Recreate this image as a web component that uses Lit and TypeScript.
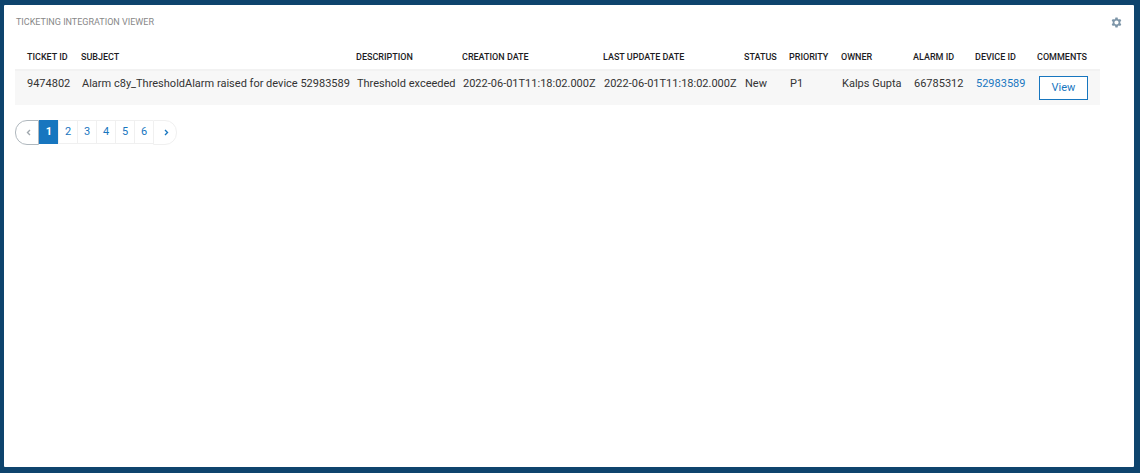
import { LitElement, html, css } from "lit";
import { customElement, state } from "lit/decorators.js";

interface Ticket {
  id: string;
  subject: string;
  description: string;
  created: string;
  updated: string;
  status: string;
  priority: string;
  owner: string;
  alarmId: string;
  deviceId: string;
}

const COLUMNS = [
  { label: "Ticket ID", width: 60 },
  { label: "Subject", width: 275 },
  { label: "Description", width: 106 },
  { label: "Creation Date", width: 141 },
  { label: "Last Update Date", width: 141 },
  { label: "Status", width: 45 },
  { label: "Priority", width: 52 },
  { label: "Owner", width: 72 },
  { label: "Alarm ID", width: 62 },
  { label: "Device ID", width: 62 },
  { label: "Comments", width: 69 },
];

const TICKETS: Ticket[] = [
  {
    id: "9474802",
    subject: "Alarm c8y_ThresholdAlarm raised for device 52983589",
    description: "Threshold exceeded",
    created: "2022-06-01T11:18:02.000Z",
    updated: "2022-06-01T11:18:02.000Z",
    status: "New",
    priority: "P1",
    owner: "Kalps Gupta",
    alarmId: "66785312",
    deviceId: "52983589",
  },
];

@customElement("ticket-table")
export class TicketTable extends LitElement {
  static styles = css`
    :host {
      display: block;
    }
    table {
      width: 100%;
      border-collapse: separate;
      border-spacing: 0;
    }
    th,
    td {
      padding: 5px 0 5px 7px;
      text-align: left;
      vertical-align: top;
      white-space: nowrap;
    }
    th {
      padding: 0 0 6px 6px;
      font-size: 9px;
      line-height: 12px;
      font-weight: 500;
      text-transform: uppercase;
      color: #1d1d1f;
      border-bottom: 2px solid #f2f2f2;
    }
    td {
      font-size: 11px;
      line-height: 16px;
      color: #333;
      background: #f7f7f7;
    }
    th:first-child,
    td:first-child {
      padding-left: 12px;
    }
    th:last-child,
    td:last-child {
      padding-right: 12px;
    }
    a {
      color: #1776bf;
      text-decoration: none;
    }
    button {
      display: block;
      box-sizing: border-box;
      width: 49px;
      height: 24px;
      margin-left: auto;
      padding: 0;
      border: 1px solid #1776bf;
      background: #fff;
      color: #1776bf;
      font: inherit;
      cursor: pointer;
    }
  `;

  render() {
    return html`
      <table>
        <colgroup>
          ${COLUMNS.map((c) => html`<col style="width:${c.width}px" />`)}
        </colgroup>
        <thead>
          <tr>
            ${COLUMNS.map((c) => html`<th scope="col">${c.label}</th>`)}
          </tr>
        </thead>
        <tbody>
          ${TICKETS.map(
            (t) => html`<tr>
              <td>${t.id}</td>
              <td>${t.subject}</td>
              <td>${t.description}</td>
              <td>${t.created}</td>
              <td>${t.updated}</td>
              <td>${t.status}</td>
              <td>${t.priority}</td>
              <td>${t.owner}</td>
              <td>${t.alarmId}</td>
              <td><a href="#device-${t.deviceId}">${t.deviceId}</a></td>
              <td><button type="button">View</button></td>
            </tr>`
          )}
        </tbody>
      </table>
    `;
  }
}

@customElement("page-nav")
export class PageNav extends LitElement {
  @state() private current = 1;
  private total = 6;

  static styles = css`
    :host {
      display: block;
    }
    nav {
      display: flex;
      align-items: flex-start;
    }
    button {
      box-sizing: border-box;
      width: 19px;
      height: 24px;
      padding: 0;
      border: 1px solid #f0f0f0;
      border-right: 0;
      background: #fff;
      color: #1776bf;
      font: inherit;
      font-size: 11px;
      line-height: 22px;
      cursor: pointer;
    }
    .current {
      border-color: #1776bf;
      background: #1776bf;
      color: #fff;
      font-weight: 700;
    }
    .step {
      display: flex;
      align-items: center;
      width: 24px;
      height: 25px;
    }
    .prev {
      justify-content: flex-end;
      padding-right: 7px;
      border-radius: 12px 0 0 12px;
    }
    .next {
      padding-left: 10px;
      border-right: 1px solid #f0f0f0;
      border-radius: 0 12px 12px 0;
    }
    .step:disabled {
      border: 1px solid #b0b8be;
      color: #a0a8ae;
      cursor: default;
    }
    svg {
      display: block;
      width: 5px;
      height: 7px;
      fill: none;
      stroke: currentColor;
      stroke-width: 1.4;
    }
  `;

  private go(page: number) {
    this.current = Math.min(this.total, Math.max(1, page));
  }

  render() {
    const pages = Array.from({ length: this.total }, (_, i) => i + 1);
    return html`
      <nav aria-label="Pages">
        <button
          class="step prev"
          aria-label="Previous"
          ?disabled=${this.current === 1}
          @click=${() => this.go(this.current - 1)}
        >
          <svg viewBox="0 0 5 7"><path d="M4 1 1.5 3.5 4 6" /></svg>
        </button>
        ${pages.map(
          (p) => html`<button
            class=${p === this.current ? "current" : ""}
            @click=${() => this.go(p)}
          >${p}</button>`
        )}
        <button
          class="step next"
          aria-label="Next"
          ?disabled=${this.current === this.total}
          @click=${() => this.go(this.current + 1)}
        >
          <svg viewBox="0 0 5 7"><path d="M1 1 3.5 3.5 1 6" /></svg>
        </button>
      </nav>
    `;
  }
}

@customElement("app-root")
export class AppRoot extends LitElement {
  static styles = css`
    :host {
      display: flex;
      box-sizing: border-box;
      min-height: 100vh;
      padding: 5px 6px 6px 4px;
      background: #0e446d;
      font-family: Roboto, "Liberation Sans", sans-serif;
    }
    .card {
      flex: 1;
      min-width: 0;
      background: #fff;
      border-radius: 1px;
    }
    header {
      display: flex;
      justify-content: space-between;
      align-items: center;
      height: 34px;
      padding: 0 12px;
    }
    h1 {
      margin: 0;
      font-size: 9px;
      line-height: 14px;
      font-weight: 400;
      text-transform: uppercase;
      color: #888;
    }
    .settings {
      padding: 0;
      border: 0;
      background: none;
      color: #7d95a8;
      cursor: pointer;
    }
    .settings svg {
      display: block;
      width: 11px;
      height: 11px;
    }
    .body {
      padding: 12px 34px 12px 11px;
      overflow-x: auto;
    }
    page-nav {
      margin-top: 15px;
    }
  `;

  render() {
    return html`
      <section class="card">
        <header>
          <h1>Ticketing Integration Viewer</h1>
          <button class="settings" type="button" aria-label="Widget settings">
            <svg viewBox="0 0 22 22" fill="currentColor" fill-rule="evenodd">
              <path
                d="M8.8 1h4.4l.6 2.8 1.800 1 2.800-.9 2.200 3.800-2.100 2v2.600l2.100 2-2.200 3.800-2.800-.9-1.800 1-.6 2.800H8.800l-.6-2.800-1.800-1-2.800.9-2.200-3.800 2.100-2V9.700l-2.100-2 2.200-3.800 2.800.9 1.800-1zM11 6.800a4.200 4.200 0 1 0 0 8.400 4.200 4.200 0 0 0 0-8.400z"
              />
            </svg>
          </button>
        </header>
        <div class="body">
          <ticket-table></ticket-table>
          <page-nav></page-nav>
        </div>
      </section>
    `;
  }
}
